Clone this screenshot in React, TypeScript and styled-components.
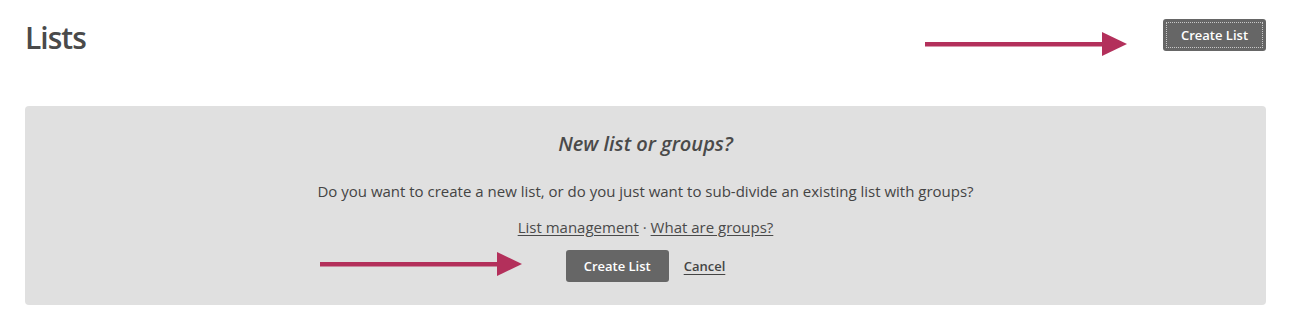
import React from "react";
import styled, { createGlobalStyle } from "styled-components";

const Global = createGlobalStyle`
  html, body { margin: 0; padding: 0; background: #fff; }
  body { font-family: "Open Sans", "Liberation Sans", sans-serif; color: #444; }
  * { box-sizing: border-box; }
`;

const Page = styled.div`
  position: relative;
  width: 1312px;
  height: 327px;
  padding: 19px 46px 0 25px;
`;

const Header = styled.header`
  display: flex;
  justify-content: space-between;
  align-items: flex-start;
  height: 87px;
`;

const Title = styled.h1`
  margin: 0;
  font-size: 30px;
  font-weight: 600;
  line-height: 38px;
  color: #4a4a4a;
  letter-spacing: -1px;
`;

const Button = styled.button<{ $focused?: boolean }>`
  position: relative;
  width: 103px;
  height: 32px;
  border: 0;
  border-radius: 3px;
  background: #666;
  color: #fff;
  font-family: "Open Sans", "Liberation Sans", sans-serif;
  font-size: 13px;
  font-weight: 600;
  cursor: pointer;
  padding: 0;
  ${(p) =>
    p.$focused &&
    `
    &::after {
      content: "";
      position: absolute;
      inset: 3px;
      border: 1px dotted #c8c8c8;
    }
  `}
`;

const Panel = styled.section`
  background: #e0e0e0;
  border-radius: 4px;
  height: 199px;
  padding-top: 24px;
  display: flex;
  flex-direction: column;
  align-items: center;
`;

const PanelTitle = styled.h2`
  margin: 0;
  font-size: 20px;
  font-style: italic;
  font-weight: 600;
  line-height: 28px;
  color: #4a4a4a;
`;

const Text = styled.p`
  margin: 23px 0 0;
  font-size: 15px;
  line-height: 20px;
  color: #444;
`;

const Links = styled.p`
  margin: 16px 0 0;
  font-size: 15px;
  line-height: 20px;
  color: #555;
`;

const Link = styled.a`
  color: #4a4a4a;
  text-decoration: underline;
  text-underline-offset: 2px;
`;

const Actions = styled.div`
  margin-top: 13px;
  display: flex;
  align-items: center;
  gap: 15px;
`;

const CancelLink = styled.a`
  font-size: 13px;
  font-weight: 600;
  color: #444;
  text-decoration: underline;
  text-underline-offset: 3px;
  text-decoration-thickness: 1px;
`;

const ArrowWrap = styled.svg<{ $left: number; $top: number }>`
  position: absolute;
  left: ${(p) => p.$left}px;
  top: ${(p) => p.$top}px;
`;

const Arrow = ({ left, top }: { left: number; top: number }) => (
  <ArrowWrap $left={left} $top={top} width="203" height="26" viewBox="0 0 203 26">
    <rect x="0" y="11" width="180" height="4.5" fill="#b3305b" />
    <polygon points="177,1 202,13 177,25" fill="#b3305b" />
  </ArrowWrap>
);

export default function App() {
  return (
    <>
      <Global />
      <Page>
        <Header>
          <Title>Lists</Title>
          <Button $focused>Create List</Button>
        </Header>
        <Panel>
          <PanelTitle>New list or groups?</PanelTitle>
          <Text>
            Do you want to create a new list, or do you just want to sub-divide an existing list with groups?
          </Text>
          <Links>
            <Link href="#">List management</Link> · <Link href="#">What are groups?</Link>
          </Links>
          <Actions>
            <Button>Create List</Button>
            <CancelLink href="#">Cancel</CancelLink>
          </Actions>
        </Panel>
        <Arrow left={925} top={31} />
        <Arrow left={320} top={251} />
      </Page>
    </>
  );
}
